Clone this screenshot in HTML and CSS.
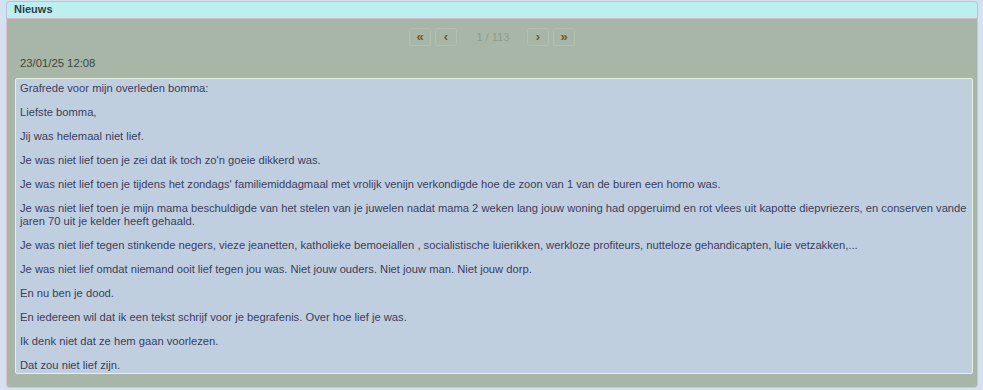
FILE: index.html
```html
<!DOCTYPE html>
<html lang="nl">
<head>
    <meta charset="UTF-8">
    <title>Nieuws</title>
    <link rel="stylesheet" href="styles.css">
</head>
<body>
    <div class="panel">
        <div class="panel-header">Nieuws</div>
        <div class="panel-body">
            <div class="pager">
                <span class="pager-btn">&laquo;</span>
                <span class="pager-btn">&lsaquo;</span>
                <span class="pager-count">1 / 113</span>
                <span class="pager-btn">&rsaquo;</span>
                <span class="pager-btn">&raquo;</span>
            </div>
            <div class="news-date">23/01/25 12:08</div>
            <div class="news-text">
                <p>Grafrede voor mijn overleden bomma:</p>
                <p>Liefste bomma,</p>
                <p>Jij was helemaal niet lief.</p>
                <p>Je was niet lief toen je zei dat ik toch zo'n goeie dikkerd was.</p>
                <p>Je was niet lief toen je tijdens het zondags' familiemiddagmaal met vrolijk venijn verkondigde hoe de zoon van 1 van de buren een homo was.</p>
                <p>Je was niet lief toen je mijn mama beschuldigde van het stelen van je juwelen nadat mama 2 weken lang jouw woning had opgeruimd en rot vlees uit kapotte diepvriezers, en conserven vande jaren 70 uit je kelder heeft gehaald.</p>
                <p>Je was niet lief tegen stinkende negers, vieze jeanetten, katholieke bemoeiallen , socialistische luierikken, werkloze profiteurs, nutteloze gehandicapten, luie vetzakken,...</p>
                <p>Je was niet lief omdat niemand ooit lief tegen jou was. Niet jouw ouders. Niet jouw man. Niet jouw dorp.</p>
                <p>En nu ben je dood.</p>
                <p>En iedereen wil dat ik een tekst schrijf voor je begrafenis. Over hoe lief je was.</p>
                <p>Ik denk niet dat ze hem gaan voorlezen.</p>
                <p>Dat zou niet lief zijn.</p>
            </div>
        </div>
    </div>
</body>
</html>
```

FILE: styles.css
```css
* {
    margin: 0;
    padding: 0;
    box-sizing: border-box;
}

body {
    font-family: 'Liberation Sans', Arial, sans-serif;
    background: #d3e1f1;
    padding: 1px 5px 0 6px;
}

.panel {
    width: 972px;
}

.panel-header {
    background: #bdeff0;
    border: 1px solid #b8c4dc;
    border-bottom-color: #d6b8c6;
    border-radius: 4px 4px 0 0;
    height: 18px;
    padding: 1px 0 0 7px;
    font-size: 11px;
    font-weight: bold;
    color: #2c3e4c;
}

.panel-body {
    background: #a7b6a7;
    border: 1px solid #e2bcc6;
    border-top: none;
    border-radius: 0 0 4px 4px;
    height: 369px;
    padding: 9px 5px 0 8px;
}

.pager {
    display: flex;
    justify-content: center;
    align-items: center;
    height: 18px;
    padding-right: 3px;
}

.pager-btn {
    width: 22px;
    height: 18px;
    border: 1px solid #b0bfb0;
    border-radius: 3px;
    margin: 0 2px;
    text-align: center;
    font-size: 13px;
    font-weight: bold;
    line-height: 15px;
    color: #6e5a2c;
}

.pager-count {
    width: 66px;
    padding-left: 2px;
    text-align: center;
    font-size: 11px;
    color: #8d9c8d;
}

.news-date {
    font-size: 11.3px;
    color: #3c4a3c;
    padding: 10px 0 0 5px;
    height: 32px;
    line-height: 15px;
}

.news-text {
    background: #c0cfe0;
    border: 1px solid #e4f2dc;
    border-radius: 2px;
    width: 958px;
    height: 296px;
    padding: 3px 4px 0 4px;
    font-size: 11.2px;
    line-height: 13px;
    color: #3a3e5c;
}

.news-text p {
    margin-bottom: 11px;
}

.news-text p:last-child {
    margin-bottom: 0;
}
```
